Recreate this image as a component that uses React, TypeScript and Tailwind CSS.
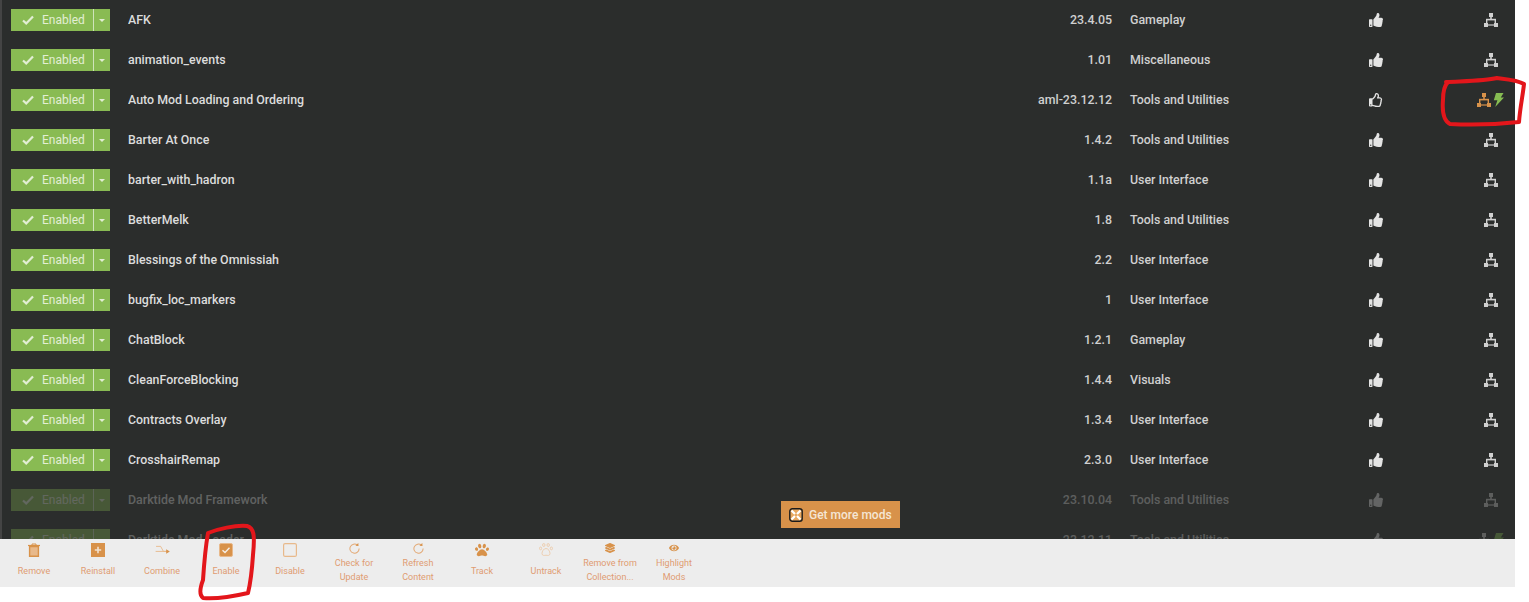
import React from "react";
import { FaThumbsUp, FaRegThumbsUp, FaPaw, FaEye, FaLayerGroup } from "react-icons/fa";

const font = { fontFamily: "Roboto, sans-serif" };

type Mod = { name: string; version: string; category: string; dim?: boolean; outline?: boolean; bolt?: boolean };

const mods: Mod[] = [
  { name: "AFK", version: "23.4.05", category: "Gameplay" },
  { name: "animation_events", version: "1.01", category: "Miscellaneous" },
  { name: "Auto Mod Loading and Ordering", version: "aml-23.12.12", category: "Tools and Utilities", outline: true, bolt: true },
  { name: "Barter At Once", version: "1.4.2", category: "Tools and Utilities" },
  { name: "barter_with_hadron", version: "1.1a", category: "User Interface" },
  { name: "BetterMelk", version: "1.8", category: "Tools and Utilities" },
  { name: "Blessings of the Omnissiah", version: "2.2", category: "User Interface" },
  { name: "bugfix_loc_markers", version: "1", category: "User Interface" },
  { name: "ChatBlock", version: "1.2.1", category: "Gameplay" },
  { name: "CleanForceBlocking", version: "1.4.4", category: "Visuals" },
  { name: "Contracts Overlay", version: "1.3.4", category: "User Interface" },
  { name: "CrosshairRemap", version: "2.3.0", category: "User Interface" },
  { name: "Darktide Mod Framework", version: "23.10.04", category: "Tools and Utilities", dim: true },
  { name: "Darktide Mod Loader", version: "23.12.11", category: "Tools and Utilities", dim: true, bolt: true },
];

function Tree({ className }: { className?: string }) {
  return (
    <svg viewBox="0 0 14 14" width="14" height="14" className={className} fill="currentColor">
      <rect x="5" y="0" width="4" height="4" />
      <rect x="6.2" y="4" width="1.6" height="3" />
      <rect x="2" y="5.8" width="10" height="1.6" />
      <rect x="2" y="6" width="1.4" height="4" />
      <rect x="10.6" y="6" width="1.4" height="4" />
      <rect x="0" y="10" width="4" height="4" />
      <rect x="10" y="10" width="4" height="4" />
      <rect x="4" y="11.4" width="6" height="1.2" />
    </svg>
  );
}

function Bolt() {
  return (
    <svg viewBox="0 0 11 14" width="11" height="14" fill="#86bc52">
      <path d="M3 0 H10.5 L7.8 4.4 H11 L2.2 14 L4.4 7.2 H0.8 Z" />
    </svg>
  );
}

function Row({ m }: { m: Mod }) {
  return (
    <div className={`flex h-10 shrink-0 items-center ${m.dim ? "opacity-30" : ""}`}>
      <div className="ml-[9px] flex h-[22px] w-[99px] shrink-0 items-center bg-[#89bb53] text-[#e2eed4]">
        <div className="flex w-[82px] items-center pl-[11px]">
          <svg viewBox="0 0 12 10" width="12" height="10" fill="none" stroke="currentColor" strokeWidth="2.2">
            <path d="M1 5.5 L4.2 8.4 L11 1.4" />
          </svg>
          <span className="ml-2 text-[12px] leading-none">Enabled</span>
        </div>
        <div className="h-full w-px bg-[#cfe3bb]" />
        <div className="flex flex-1 items-center justify-center">
          <div className="h-0 w-0 border-x-[3px] border-t-[3px] border-x-transparent border-t-[#e2eed4]" />
        </div>
      </div>
      <div className="ml-[18px] flex-1 truncate text-[12.4px] font-medium text-[#dcdcdc]">{m.name}</div>
      <div className="w-[200px] shrink-0 text-right text-[12.4px] font-medium text-[#d0d0d0]">{m.version}</div>
      <div className="ml-[18px] w-[214px] shrink-0 text-[12.4px] font-medium text-[#d0d0d0]">{m.category}</div>
      <div className="flex w-[64px] shrink-0 justify-center text-[14px] text-[#e4e4e4]">
        {m.outline ? <FaRegThumbsUp /> : <FaThumbsUp />}
      </div>
      <div className={`flex w-[107px] shrink-0 items-center justify-end ${m.bolt ? "pr-[11px]" : "pr-[17px]"}`}>
        <div className="flex items-center gap-[2px]">
          <Tree className={m.outline ? "text-[#d8924a]" : "text-[#d0d0d0]"} />
          {m.bolt && <Bolt />}
        </div>
      </div>
    </div>
  );
}

const O = "#d8924a";

function Trash() {
  return (
    <svg viewBox="0 0 14 14" width="14" height="14">
      <path d="M1 2.5 H13" stroke={O} strokeWidth="1.2" />
      <path d="M5 2.5 V1 H9 V2.5" stroke={O} strokeWidth="1" fill="none" />
      <path d="M2.6 3.5 H11.4 V13.2 H2.6 Z" fill="#e8b98b" stroke={O} strokeWidth="1.4" />
    </svg>
  );
}
function Plus() {
  return (
    <svg viewBox="0 0 14 14" width="14" height="14">
      <rect width="14" height="14" fill={O} />
      <path d="M7 3.8 V10.2 M3.8 7 H10.2" stroke="#f2e2d0" strokeWidth="1.6" />
    </svg>
  );
}
function Combine() {
  return (
    <svg viewBox="0 0 16 12" width="15" height="11" fill="none">
      <path d="M1 1.5 H6 L9 7 H13" stroke="#e8b98b" strokeWidth="1" />
      <path d="M0.5 7 H13" stroke="#e8b98b" strokeWidth="1" />
      <path d="M12 4.5 L16 7 L12 9.5 Z" fill={O} />
    </svg>
  );
}
function Checked() {
  return (
    <svg viewBox="0 0 14 14" width="14" height="14">
      <rect x="0.5" y="0.5" width="13" height="13" rx="1.5" fill={O} stroke="#e8b98b" />
      <path d="M3.5 7.2 L6 9.5 L10.5 4.8" stroke="#f6efe6" strokeWidth="1.4" fill="none" />
    </svg>
  );
}
function Unchecked() {
  return (
    <svg viewBox="0 0 14 14" width="14" height="14">
      <rect x="0.6" y="0.6" width="12.8" height="12.8" rx="1.5" fill="none" stroke="#e8b98b" strokeWidth="1.2" />
    </svg>
  );
}
function Refresh() {
  return (
    <svg viewBox="0 0 12 12" width="11" height="11" fill="none">
      <path d="M9.2 2.3 A5 5 0 1 0 11 6" stroke="#e3a873" strokeWidth="1.1" />
      <path d="M7 3 L10.4 3.3 L10.2 0 Z" fill={O} />
    </svg>
  );
}
function OutlinePaw() {
  return (
    <svg viewBox="0 0 14 14" width="14" height="14" fill="none" stroke="#eccbaa" strokeWidth="0.9">
      <ellipse cx="4.8" cy="2" rx="1.2" ry="1.5" />
      <ellipse cx="9.2" cy="2" rx="1.2" ry="1.5" />
      <ellipse cx="1.6" cy="5.4" rx="1.1" ry="1.4" />
      <ellipse cx="12.4" cy="5.4" rx="1.1" ry="1.4" />
      <path d="M7 5.5 C4.5 5.5 3 8.5 3 10.5 C3 13 5.5 12.5 7 12.2 C8.5 12.5 11 13 11 10.5 C11 8.5 9.5 5.5 7 5.5 Z" />
    </svg>
  );
}

const tools: { icon: React.ReactNode; label: string[] }[] = [
  { icon: <Trash />, label: ["Remove"] },
  { icon: <Plus />, label: ["Reinstall"] },
  { icon: <Combine />, label: ["Combine"] },
  { icon: <Checked />, label: ["Enable"] },
  { icon: <Unchecked />, label: ["Disable"] },
  { icon: <Refresh />, label: ["Check for", "Update"] },
  { icon: <Refresh />, label: ["Refresh", "Content"] },
  { icon: <FaPaw className="text-[14px] text-[#d8924a]" />, label: ["Track"] },
  { icon: <OutlinePaw />, label: ["Untrack"] },
  { icon: <FaLayerGroup className="text-[10px] text-[#d8924a]" />, label: ["Remove from", "Collection..."] },
  { icon: <FaEye className="text-[10px] text-[#d8924a]" />, label: ["Highlight", "Mods"] },
];

function Tool({ t }: { t: (typeof tools)[number] }) {
  const two = t.label.length > 1;
  return (
    <div className="flex h-12 w-16 shrink-0 flex-col items-center">
      <div className={`flex items-center justify-center ${two ? "h-[17px] pt-[1px]" : "h-[22px]"}`}>{t.icon}</div>
      <div className={`text-center text-[9px] leading-[14px] text-[#e09c72] ${two ? "" : "mt-[3px]"}`}>
        {t.label.map((l) => (
          <div key={l}>{l}</div>
        ))}
      </div>
    </div>
  );
}

export default function App() {
  return (
    <div className="relative h-[602px] w-[1529px] overflow-hidden bg-white" style={font}>
      <div className="w-[1515px]">
        <div className="flex h-[539px] flex-col overflow-hidden border-l-2 border-[#444444] bg-[#2b2d2c]">
          {mods.map((m) => (
            <Row key={m.name} m={m} />
          ))}
        </div>
        <div className="flex h-12 bg-[#ededed] pl-[2px]">
          {tools.map((t) => (
            <Tool key={t.label.join()} t={t} />
          ))}
        </div>
      </div>

      <div className="absolute left-[781px] top-[501px] flex h-[27px] w-[119px] items-center bg-[#d8924a] pl-[8px] text-[12px] font-medium text-[#f5e6d4]">
        <svg viewBox="0 0 14 14" width="14" height="14">
          <rect x="0.8" y="0.8" width="12.4" height="12.4" rx="2.5" fill="#e8a860" stroke="#1c1c1c" strokeWidth="1.4" />
          <path d="M2.5 2.5 L6 6 M11.5 2.5 L8 6 M2.5 11.5 L6 8 M11.5 11.5 L8 8" stroke="#fff" strokeWidth="2.2" />
        </svg>
        <span className="ml-[6px]">Get more mods</span>
      </div>

      <svg className="pointer-events-none absolute left-0 top-0" width="1529" height="602" fill="none" stroke="#e3161b" strokeWidth="4" strokeLinecap="round" strokeLinejoin="round">
        <path d="M1446 82 C1465 81 1485 81 1497 78 C1505 79 1518 80 1524 84 C1523 94 1520 108 1519 122 C1500 124 1470 125 1450 124 C1444 121 1442 112 1443 100 C1443 92 1444 86 1448 82" />
        <path d="M208 533 C218 529 235 525 247 526 C254 528 255 535 253 555 C252 570 250 585 248 593 C235 596 215 599 203 598 C199 595 200 588 203 580 C204 565 205 550 208 533 Z" />
      </svg>
    </div>
  );
}
